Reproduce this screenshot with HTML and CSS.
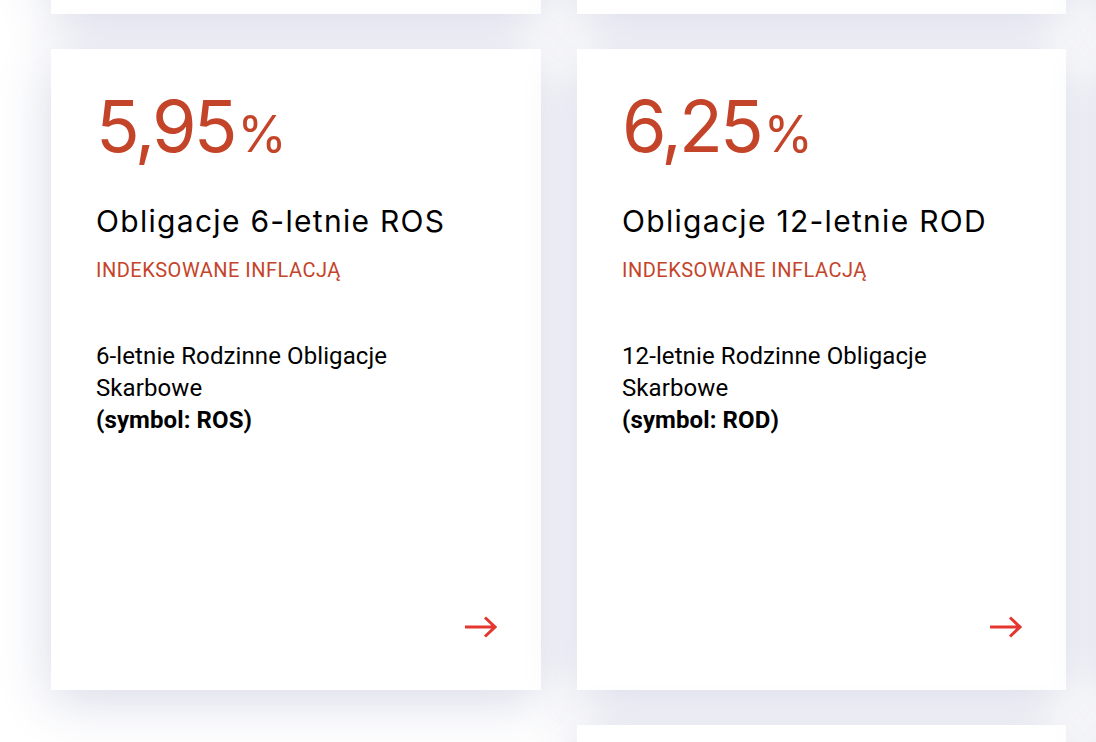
FILE: index.html
```html
<!DOCTYPE html>
<html lang="pl">
<head>
<meta charset="utf-8">
<link rel="stylesheet" href="styles.css">
<title>Obligacje</title>
</head>
<body>
<div class="grid">
  <div class="card"></div>
  <div class="card"></div>
  <div class="card"></div>

  <a class="card bond" href="#">
    <div class="rate">5,95<span class="pct">%</span></div>
    <h3 class="title">Obligacje 6-letnie ROS</h3>
    <div class="tag">INDEKSOWANE INFLACJĄ</div>
    <p class="desc">6-letnie Rodzinne Obligacje Skarbowe<br><strong>(symbol: ROS)</strong></p>
    <span class="arrow"><svg width="33" height="22" viewBox="0 0 33 22"><path d="M1 11H31M21 1.5L31 11L21 20.5" fill="none" stroke="#e3372f" stroke-width="3"/></svg></span>
  </a>
  <a class="card bond" href="#">
    <div class="rate">6,25<span class="pct">%</span></div>
    <h3 class="title">Obligacje 12-letnie ROD</h3>
    <div class="tag">INDEKSOWANE INFLACJĄ</div>
    <p class="desc">12-letnie Rodzinne Obligacje Skarbowe<br><strong>(symbol: ROD)</strong></p>
    <span class="arrow"><svg width="33" height="22" viewBox="0 0 33 22"><path d="M1 11H31M21 1.5L31 11L21 20.5" fill="none" stroke="#e3372f" stroke-width="3"/></svg></span>
  </a>
  <div class="card"></div>

  <div class="card empty-slot"></div>
  <div class="card"></div>
  <div class="card"></div>
</div>
</body>
</html>
```

FILE: styles.css
```css
html, body {
  margin: 0;
  padding: 0;
}
body {
  background: #ffffff;
  overflow: hidden;
  width: 1096px;
  height: 742px;
}
.grid {
  display: grid;
  grid-template-columns: 490px 489px 490px;
  grid-auto-rows: 641px;
  column-gap: 36px;
  row-gap: 35px;
  margin-left: 51px;
  margin-top: -627px;
  width: 1505px;
}
.card {
  background: #ffffff;
  box-shadow: 0 10px 50px rgba(45, 55, 125, 0.19);
}
.empty-slot {
  visibility: hidden;
}
.bond {
  display: flex;
  flex-direction: column;
  padding: 37px 44px 52px 45px;
  text-decoration: none;
  color: #000;
}
.rate {
  font-family: "Inter", "Noto Sans", sans-serif;
  font-size: 72px;
  line-height: 80px;
  color: #c4442a;
  letter-spacing: -3px;
}
.pct {
  font-size: 50px;
  letter-spacing: 0;
  margin-left: 3px;
}
.title {
  font-family: "Inter", "Noto Sans", sans-serif;
  font-weight: 400;
  font-size: 30px;
  line-height: 40px;
  letter-spacing: 1.3px;
  margin: 27px 0 0;
  color: #000;
}
.tag {
  font-family: "Roboto", sans-serif;
  font-size: 20px;
  line-height: 26px;
  letter-spacing: 0.5px;
  color: #c4442a;
  margin-top: 16px;
}
.desc {
  font-family: "Roboto", sans-serif;
  font-size: 24px;
  line-height: 32px;
  letter-spacing: 0.1px;
  margin: 57px 0 0;
  max-width: 360px;
  color: #000;
}
.desc strong {
  font-weight: 700;
}
.arrow {
  margin-top: auto;
  align-self: flex-end;
  display: flex;
}
```
